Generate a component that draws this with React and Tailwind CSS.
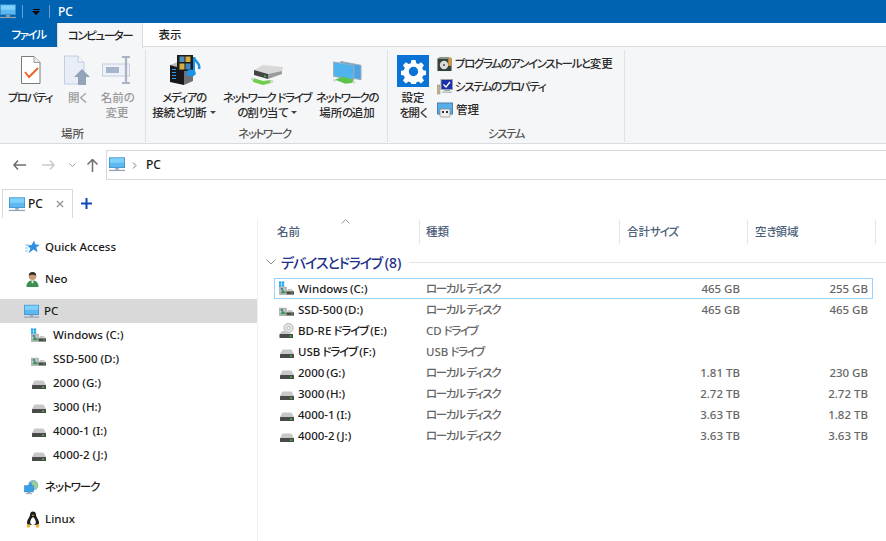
import React from "react";

const F = "font-['Noto_Sans','Noto_Sans_CJK_JP',sans-serif] [font-feature-settings:'palt']";

// Kana runs are set tighter than kanji and Latin, as in the reference's UI face.
function K({ children, loose }) {
  const parts = String(children).split(/([\u3040-\u30FF]+)/);
  return (
    <>
      {parts.map((p, i) =>
        /[\u3040-\u30FF]/.test(p) ? (
          <span key={i} className={loose ? "tracking-[-1.1px]" : "tracking-[-1.4px]"}>{p}</span>
        ) : (
          <span key={i} className="[word-spacing:-1px]">{p}</span>
        )
      )}
    </>
  );
}

function Monitor({ className = "w-4 h-4" }) {
  return (
    <svg viewBox="0 0 18 16" className={className}>
      <rect x="0.5" y="0.5" width="17" height="11" fill="#5cb8f0" stroke="#3a8fd0" strokeWidth="1" />
      <rect x="1" y="1" width="16" height="5" fill="#7fd0fa" />
      <rect x="7" y="12" width="4" height="2" fill="#9aa7b3" />
      <rect x="0" y="14" width="18" height="1.4" fill="#8fa3b5" />
    </svg>
  );
}
function Hdd({ className = "w-[14px] h-[14px]", led = "#3ec43e" }) {
  return (
    <svg viewBox="0 0 14 14" className={className}>
      <path d="M2.5 4.5h9L14 9H0z" fill="#c8c8c8" />
      <rect x="0" y="9" width="14" height="4" rx="0.5" fill="#4a4a4a" />
      <rect x="10" y="10.4" width="2" height="1.4" fill={led} />
    </svg>
  );
}
function WinDrive({ win }) {
  return (
    <svg viewBox="0 0 16 15" className="w-[15px] h-[15px]">
      {win && (
        <g fill="#14a0e8">
          <rect x="0" y="0" width="2.5" height="2.5" />
          <rect x="3" y="0" width="2.5" height="2.5" />
          <rect x="0" y="3" width="2.5" height="2.5" />
          <rect x="3" y="3" width="2.5" height="2.5" />
        </g>
      )}
      <rect x="0.5" y="6" width="7.5" height="8" fill="#b8c4b8" stroke="#888" strokeWidth="0.5" />
      <path d="M1.5 12.5l2.5-4 2 2.5 1-1v2.5z" fill="#3f8f5f" />
      <rect x="2" y="7" width="2" height="2" fill="#3a70b0" />
      <path d="M9.5 8h4l2 2.5h-7z" fill="#c8c8c8" />
      <rect x="8" y="10.5" width="8" height="3.5" fill="#4a4a4a" />
      <rect x="13" y="11.6" width="1.6" height="1.2" fill="#3ec43e" />
    </svg>
  );
}
function BdDrive() {
  return (
    <svg viewBox="0 0 15 16" className="w-[15px] h-[16px]">
      <circle cx="9.5" cy="5" r="4.6" fill="#e4e4e4" stroke="#a8a8a8" strokeWidth="0.8" />
      <circle cx="9.5" cy="5" r="1.6" fill="#fff" stroke="#999" strokeWidth="0.6" />
      <path d="M3 8h5l4 3H0.5z" fill="#c8c8c8" />
      <rect x="0.5" y="11" width="13.5" height="4" fill="#4a4a4a" />
      <rect x="10.5" y="12.4" width="2" height="1.4" fill="#3ec43e" />
    </svg>
  );
}
function Star() {
  return (
    <svg viewBox="0 0 15 14" className="w-[15px] h-[14px]">
      <path d="M9 0.5l1.4 4 4.4.2-3.5 2.7 1.3 4.8L8.6 9.6 3.5 13.3l1.9-5L2 5.6l4.6-.6z" fill="#2f8fe0" />
      <path d="M0 5h4M0 8h3M0 11h3" stroke="#7cc5f5" strokeWidth="1" />
    </svg>
  );
}
function Person() {
  return (
    <svg viewBox="0 0 16 17" className="w-[16px] h-[17px]">
      <circle cx="8" cy="5" r="4" fill="#c99a72" />
      <path d="M4 4.5C4 1.5 6 .5 8 .5s4 1 4 4C10 3 6 3 4 4.5z" fill="#2e2a26" />
      <path d="M1.5 16.5c0-5 3-7 6.5-7s6.5 2 6.5 7z" fill="#3c8f4f" />
      <path d="M7 9.5h2v3H7z" fill="#e4e4e4" />
    </svg>
  );
}
function Net() {
  return (
    <svg viewBox="0 0 17 17" className="w-[17px] h-[17px]">
      <circle cx="10.5" cy="6" r="5.6" fill="#4f9dd8" />
      <path d="M7 2c2 1 3 3 2 5s3 2 3 4c2-1 4-3 4-5s-2-4-4-5.400z" fill="#9ccc9a" />
      <rect x="0.500" y="6.500" width="10" height="7" fill="#39a0e8" stroke="#2b7fc0" strokeWidth="0.6" />
      <rect x="4" y="13.500" width="3" height="1.500" fill="#8aa0b0" />
      <rect x="2" y="15" width="7" height="1" fill="#8aa0b0" />
    </svg>
  );
}
function Tux() {
  return (
    <svg viewBox="0 0 14 17" className="w-[14px] h-[17px]">
      <path d="M7 0.500c-2 0-3 1.500-3 3.500 0 2-3 4.500-3 8 0 1.500 1 2 2 2h8c1 0 2-.5 2-2 0-3.500-3-6-3-8 0-2-1-3.500-3-3.500z" fill="#1b1b1b" />
      <path d="M7 6c-1.500 1-2.800 3-2.800 5.500 0 1.500 1 2.500 2.800 2.500s2.800-1 2.800-2.500C9.800 9 8.500 7 7 6z" fill="#fff" />
      <path d="M5.500 3.800L7 5.200l1.500-1.400z" fill="#efb02e" />
      <path d="M0.500 14l3-1 1 3-3 .8zM13.500 14l-3-1-1 3 3 .8z" fill="#efb02e" />
    </svg>
  );
}

function Properties() {
  return (
    <svg viewBox="0 0 24 30" className="w-[24px] h-[30px]">
      <path d="M3.500 1.500H16l6 6v21H3.500z" fill="#fff" stroke="#7a7a7a" />
      <path d="M16 1.500v6h6" fill="#eee" stroke="#9a9a9a" />
      <path d="M7 17l4 5 9-9" fill="none" stroke="#e8662a" strokeWidth="2" />
    </svg>
  );
}
function OpenIcon() {
  return (
    <svg viewBox="0 0 28 30" className="w-[28px] h-[30px]">
      <path d="M1.500 1H15l6 6v22H1.500z" fill="#e8edf6" stroke="#c2cee2" />
      <path d="M15 1v6h6" fill="#f4f6fb" stroke="#c2cee2" />
      <path d="M19 14l8 8h-4v8h-8v-8h-4z" fill="#93a3ba" />
    </svg>
  );
}
function RenameIcon() {
  return (
    <svg viewBox="0 0 30 28" className="w-[30px] h-[28px]">
      <rect x="0.500" y="8" width="27" height="12" fill="#eef1f7" stroke="#c4cedf" />
      <rect x="4" y="11" width="13" height="6" fill="#a6b5cc" />
      <path d="M20 1h8M24 1v26M20 27h8" fill="none" stroke="#a8b4c4" strokeWidth="2.200" />
    </svg>
  );
}
function MediaIcon() {
  return (
    <svg viewBox="0 0 34 32" className="w-[34px] h-[32px]">
      <path d="M3 11l8-3 15 4-9 3z" fill="#b9b9bd" />
      <path d="M3 11l14 4v16L3 28z" fill="#17171c" />
      <path d="M17 15l9-3v15l-9 4z" fill="#6f6f75" />
      <g fill="#2f9be6">
        <rect x="5" y="15" width="4" height="1" />
        <rect x="5" y="18" width="4" height="1" />
        <rect x="5" y="21" width="4" height="1" />
        <rect x="5" y="24" width="4" height="1" />
      </g>
      <rect x="10" y="1" width="16" height="16" fill="#1c1c1c" />
      <rect x="12.500" y="2.500" width="5" height="5.500" fill="#4f8fbf" />
      <rect x="18.500" y="2.500" width="5" height="5.500" fill="#d9ad3c" />
      <rect x="12.500" y="9.500" width="5" height="6" fill="#d9ad3c" />
      <rect x="18.500" y="9.500" width="5" height="6" fill="#3e86c4" />
      <path d="M27 3c0 5 7 5 5 12" fill="none" stroke="#1c93e6" strokeWidth="2.500" />
      <path d="M27 3v15" stroke="#1c93e6" strokeWidth="2" />
      <ellipse cx="24" cy="19" rx="4.800" ry="3.600" fill="#1c93e6" />
    </svg>
  );
}
function MapDrive() {
  return (
    <svg viewBox="0 0 32 20" className="w-[32px] h-[20px] mt-[9px]">
      <path d="M3 5L12 0l20 2-1 4-14 3z" fill="#d8d8d8" />
      <path d="M3 5l14 4v5L3 10z" fill="#444" />
      <path d="M17 9l14-3v3l-14 5z" fill="#9b9b9b" />
      <rect x="13" y="10.500" width="2" height="1.500" fill="#3ec43e" />
      <path d="M2 13l10 3 8-1v3l-8 2-10-3z" fill="#6fce4c" />
      <rect x="0" y="12.500" width="3" height="3" rx="1.500" fill="#d5d5d5" />
      <rect x="19" y="15" width="3.500" height="3" rx="1.500" fill="#d5d5d5" />
    </svg>
  );
}
function AddNet() {
  return (
    <svg viewBox="0 0 30 26" className="w-[29px] h-[26px] mt-[5px]">
      <path d="M8 1l21 4v15L8 16z" fill="#4ca4e6" stroke="#a8aeb4" />
      <path d="M.5 1.500l21 3.500v15l-21-3.500z" fill="#4fb4ee" stroke="#a4acb4" />
      <path d="M2 20l11 4 8-1v-3l-11-3z" fill="#5cc24a" />
      <rect x="0" y="19" width="3" height="3" rx="1.500" fill="#d5d5d5" />
      <rect x="20" y="21" width="3" height="3" rx="1.500" fill="#d5d5d5" />
    </svg>
  );
}
function Gear() {
  return (
    <div className="w-[32px] h-[32px] bg-[#0a74d6] flex items-center justify-center">
      <svg viewBox="0 0 24 24" className="w-[25px] h-[25px]">
        <path
          fill="#fff"
          fillRule="evenodd"
          d="M10 1h4l.6 3 2.200.9 2.500-1.700 2.800 2.800-1.700 2.500.9 2.200 3 .6v4l-3 .6-.9 2.200 1.700 2.500-2.800 2.800-2.500-1.700-2.200.9-.6 3h-4l-.6-3-2.200-.9-2.500 1.700-2.800-2.800 1.700-2.500-.9-2.200-3-.6v-4l3-.6.9-2.200-1.700-2.500 2.800-2.800 2.500 1.700 2.200-.9zM12 7.500a4.500 4.500 0 1 0 0 9 4.500 4.500 0 0 0 0-9z"
        />
      </svg>
    </div>
  );
}
function Uninstall() {
  return (
    <svg viewBox="0 0 16 16" className="w-[15px] h-[16px]">
      <rect x="0.500" y="2" width="15" height="13.500" fill="#34423a" />
      <rect x="12" y="1" width="3.500" height="9" fill="#d69a45" />
      <rect x="2" y="0.500" width="11" height="2" fill="#8a9a8a" />
      <circle cx="7.500" cy="9" r="4.500" fill="#dcdcdc" />
      <circle cx="7.500" cy="9" r="1" fill="#444" />
    </svg>
  );
}
function SysProps() {
  return (
    <svg viewBox="0 0 16 16" className="w-[16px] h-[16px]">
      <rect x="0" y="6" width="3" height="9" fill="#c8b48a" stroke="#777" strokeWidth="0.4" />
      <rect x="4" y="0.500" width="11.500" height="10" fill="#1c2fa8" stroke="#9aa4b0" />
      <path d="M6.500 5.500l2.500 2.500 4-5" stroke="#fff" strokeWidth="1.300" fill="none" />
      <rect x="7" y="11" width="6" height="1" fill="#9aa4b0" />
      <rect x="5" y="12.500" width="10" height="1.500" fill="#b8c0c8" />
    </svg>
  );
}
function Manage() {
  return (
    <svg viewBox="0 0 16 16" className="w-[16px] h-[16px]">
      <rect x="0.500" y="1" width="15" height="11" fill="#58aeea" stroke="#4f7fa8" />
      <rect x="3" y="7" width="10" height="8" rx="1" fill="#eee" stroke="#777" strokeWidth="0.600" />
      <rect x="5" y="9" width="2" height="2" fill="#333" />
      <rect x="9" y="9" width="2" height="2" fill="#333" />
    </svg>
  );
}

function Caret() {
  return <span className="inline-block ml-[3px] mb-[2px] align-middle w-0 h-0 border-l-[3px] border-r-[3px] border-t-[3px] border-l-transparent border-r-transparent border-t-[#444]" />;
}

function RibbonBtn({ w, icon, lines, dim }) {
  return (
    <div className={`flex flex-col items-center ${w} ${dim ? "text-[#9a9a9a]" : "text-[#2b2b2b]"}`}>
      <div className="h-[36px] mt-[2px] flex items-center justify-center">{icon}</div>
      <div className="text-[11.5px] leading-[15px] text-center whitespace-nowrap mt-[2px]">
        {lines.map((l, i) => (
          <div key={i}>{l}</div>
        ))}
      </div>
    </div>
  );
}

function Group({ w, label, children, className = "" }) {
  return (
    <div className={`${w} h-[92px] my-[3px] border-r border-[#dfe1e3] flex flex-col ${className}`}>
      <div className="flex-1 flex min-h-0">{children}</div>
      <div className="text-center text-[11.5px] leading-[14px] text-[#555] mb-[1px]">{label}</div>
    </div>
  );
}

function SideItem({ icon, label, className = "", pl = "pl-[25px]", h = "h-[24px]", gap = "gap-[5px]" }) {
  return (
    <div className={`flex items-center ${h} ${pl} ${gap} text-[11.5px] text-[#1a1a1a] ${className}`}>
      <span className="w-[15px] flex items-center justify-center shrink-0">{icon}</span>
      <span>{label}</span>
    </div>
  );
}

const rows = [
  { icon: <WinDrive win />, name: "Windows (C:)", type: "ローカル ディスク", size: "465 GB", free: "255 GB", sel: true },
  { icon: <WinDrive />, name: "SSD-500 (D:)", type: "ローカル ディスク", size: "465 GB", free: "465 GB" },
  { icon: <BdDrive />, name: "BD-RE ドライブ (E:)", type: "CD ドライブ", size: "", free: "" },
  { icon: <Hdd />, name: "USB ドライブ (F:)", type: "USB ドライブ", size: "", free: "" },
  { icon: <Hdd />, name: "2000 (G:)", type: "ローカル ディスク", size: "1.81 TB", free: "230 GB" },
  { icon: <Hdd />, name: "3000 (H:)", type: "ローカル ディスク", size: "2.72 TB", free: "2.72 TB" },
  { icon: <Hdd />, name: "4000-1 (I:)", type: "ローカル ディスク", size: "3.63 TB", free: "1.82 TB" },
  { icon: <Hdd />, name: "4000-2 (J:)", type: "ローカル ディスク", size: "3.63 TB", free: "3.63 TB" },
];

function HeaderCell({ w, label, pl = "pl-[7px]" }) {
  return (
    <div className={`${w} h-[24px] border-r border-[#e5e5e5] ${pl} flex items-center text-[11.5px] text-[#4c607a]`}><span><K loose>{label}</K></span></div>
  );
}

export default function App() {
  return (
    <div className={`w-[886px] h-[541px] overflow-hidden bg-white flex flex-col ${F} font-medium`}>
      {/* title bar */}
      <div className="h-[23px] bg-[#0063b1] flex items-center text-white shrink-0">
        <Monitor className="w-[16px] h-[15px]" />
        <div className="w-px h-[13px] bg-[#6a9ed0] ml-[6px]" />
        <div className="ml-[9px] flex flex-col items-center gap-[1px]">
          <div className="w-[7px] h-px bg-black" />
          <div className="w-0 h-0 border-l-[4px] border-r-[4px] border-t-[4px] border-l-transparent border-r-transparent border-t-black" />
        </div>
        <div className="w-px h-[13px] bg-[#6a9ed0] ml-[9px]" />
        <span className="ml-[8px] text-[12px]">PC</span>
      </div>
      {/* tabs */}
      <div className="h-[24px] flex shrink-0 border-b border-[#dadbdc] text-[11.5px]">
        <div className="w-[57px] h-[24px] bg-[#0063b1] text-white flex items-center justify-center"><span><K>ファイル</K></span></div>
        <div className="w-[86px] h-[25px] bg-[#f5f6f7] border-x border-[#dadbdc] text-[#222] flex items-center justify-center relative z-10"><span><K>コンピューター</K></span></div>
        <div className="w-[54px] flex items-center justify-center text-[#222]">表示</div>
      </div>
      {/* ribbon */}
      <div className="h-[97px] bg-[#f5f6f7] border-b border-[#dadbdc] flex shrink-0">
        <Group w="w-[146px]" label="場所">
          <div className="flex pl-[4px]">
            <RibbonBtn w="w-[52px]" icon={<Properties />} lines={[<K>プロパティ</K>]} />
            <RibbonBtn w="w-[42px]" dim icon={<OpenIcon />} lines={[<K>開く</K>]} />
            <RibbonBtn w="w-[38px]" dim icon={<RenameIcon />} lines={[<K>名前の</K>, "変更"]} />
          </div>
        </Group>
        <Group w="w-[242px]" label={<span className="pr-[4px] inline-block"><K>ネットワーク</K></span>}>
          <div className="flex pl-[3px]">
            <RibbonBtn w="w-[70px]" icon={<MediaIcon />} lines={[<K>メディアの</K>, <><K>接続と切断</K><Caret /></>]} />
            <RibbonBtn w="w-[96px]" icon={<MapDrive />} lines={[<K>ネットワーク ドライブ</K>, <><K>の割り当て</K><Caret /></>]} />
            <RibbonBtn w="w-[64px]" icon={<AddNet />} lines={[<K>ネットワークの</K>, <K>場所の追加</K>]} />
          </div>
        </Group>
        <Group w="w-[237px]" label={<K>システム</K>}>
          <div className="flex pl-[9px] pt-[5px]">
            <div className="w-[32px] flex flex-col items-center text-[11.5px] leading-[15px] text-[#2b2b2b] text-center whitespace-nowrap">
              <Gear />
              <div className="mt-[3px]">設定</div>
              <div><K>を開く</K></div>
            </div>
            <div className="ml-[8px] flex flex-col text-[11.5px] text-[#2b2b2b] -mt-[3px]">
              <div className="h-[23px] flex items-center gap-[3px] whitespace-nowrap"><Uninstall /><span><K>プログラムのアンインストールと変更</K></span></div>
              <div className="h-[23px] flex items-center gap-[2px] whitespace-nowrap"><SysProps /><span><K>システムのプロパティ</K></span></div>
              <div className="h-[23px] flex items-center gap-[3px] whitespace-nowrap"><Manage />管理</div>
            </div>
          </div>
        </Group>
      </div>
      {/* address */}
      <div className="h-[36px] pt-[6px] flex items-center shrink-0 pl-[13px]">
        <svg viewBox="0 0 13 10" className="w-[13px] h-[10px]"><path d="M5 .5L1 5l4 4.500M1 5h12" fill="none" stroke="#6d6d6d" strokeWidth="1.500" /></svg>
        <svg viewBox="0 0 13 10" className="w-[13px] h-[10px] ml-[16px]"><path d="M8 .5L12 5 8 9.500M12 5H0" fill="none" stroke="#c9c9c9" strokeWidth="1.500" /></svg>
        <svg viewBox="0 0 7 5" className="w-[7px] h-[5px] ml-[14px]"><path d="M.5 .5l3 3 3-3" fill="none" stroke="#9a9a9a" /></svg>
        <svg viewBox="0 0 11 13" className="w-[11px] h-[13px] ml-[11px]"><path d="M.5 5.500L5.500 .5l5 5M5.500 1v12" fill="none" stroke="#6d6d6d" strokeWidth="1.500" /></svg>
        <div className="ml-[8px] flex-1 h-[30px] border-y border-l border-[#d9d9d9] flex items-center pl-[2px] text-[12px] text-[#1a1a1a]">
          <Monitor className="w-[16px] h-[15px] -mt-[2px]" />
          <svg viewBox="0 0 5 7" className="w-[5px] h-[7px] ml-[7px]"><path d="M1 .5l3 3-3 3" fill="none" stroke="#777" /></svg>
          <span className="ml-[9px]">PC</span>
        </div>
      </div>
      {/* explorer tabs */}
      <div className="h-[38px] flex items-start pt-[9px] pl-[2px] shrink-0">
        <div className="w-[71px] h-[29px] border-x border-t border-[#d9d9d9] flex items-center pl-[6px] text-[12px] text-[#1a1a1a]">
          <Monitor className="w-[16px] h-[15px]" />
          <span className="ml-[3px]">PC</span>
          <svg viewBox="0 0 9 9" className="w-[8px] h-[8px] ml-[13px]"><path d="M1 1l7 7M8 1L1 8" stroke="#9a9a9a" strokeWidth="1.600" /></svg>
        </div>
        <svg viewBox="0 0 11 11" className="w-[11px] h-[11px] ml-[8px] mt-[9px]"><path d="M5.500 0v11M0 5.500h11" stroke="#0d47b5" strokeWidth="2" /></svg>
      </div>
      {/* main */}
      <div className="flex flex-1 min-h-0">
        <div className="w-[258px] shrink-0 border-r border-[#f1f1f1] pt-[17px]">
          <SideItem icon={<Star />} label="Quick Access" className="mb-[8px]" />
          <SideItem icon={<Person />} label="Neo" className="mb-[8px]" />
          <SideItem icon={<Monitor className="w-[17px] h-[15px]" />} label="PC" className="bg-[#d9d9d9]" pl="pl-[24px]" />
          <div className="pl-[31px]">
            <SideItem icon={<WinDrive win />} label="Windows (C:)" pl="pl-0" gap="gap-[7px]" />
            <SideItem icon={<WinDrive />} label="SSD-500 (D:)" pl="pl-0" gap="gap-[7px]" />
            <SideItem icon={<Hdd />} label="2000 (G:)" pl="pl-0" gap="gap-[7px]" />
            <SideItem icon={<Hdd />} label="3000 (H:)" pl="pl-0" gap="gap-[7px]" />
            <SideItem icon={<Hdd />} label="4000-1 (I:)" pl="pl-0" gap="gap-[7px]" />
            <SideItem icon={<Hdd />} label="4000-2 (J:)" pl="pl-0" gap="gap-[7px]" />
          </div>
          <SideItem icon={<Net />} label={<K loose>ネットワーク</K>} pl="pl-[24px]" gap="gap-[6px]" className="mt-[8px] mb-[8px]" />
          <SideItem icon={<Tux />} label="Linux" pl="pl-[25px]" />
        </div>
        <div className="flex-1 min-w-0 relative">
          <svg viewBox="0 0 9 5" className="absolute left-[83px] top-[1px] w-[9px] h-[5px]"><path d="M.5 4.500l4-4 4 4" fill="none" stroke="#9a9a9a" /></svg>
          <div className="flex pt-[2px] pl-[13px]">
            <HeaderCell w="w-[149px]" label="名前" pl="pl-[6px]" />
            <HeaderCell w="w-[200px]" label="種類" pl="pl-[6px]" />
            <HeaderCell w="w-[128px]" label="合計サイズ" />
            <HeaderCell w="w-[128px]" label="空き領域" />
          </div>
          <div className="flex items-center mt-[6px] h-[24px] pl-[8px] pr-0">
            <svg viewBox="0 0 10 6" className="w-[10px] h-[6px]"><path d="M.5 .5L5 5 9.500 .5" fill="none" stroke="#8a8a8a" /></svg>
            <span className="ml-[5px] text-[14px] text-[#1e3287]"><K loose>デバイスとドライブ (8)</K></span>
            <div className="flex-1 h-px bg-[#e4e4e4] ml-[8px]" />
          </div>
          <div className="mt-[4px] ml-[16px] w-[599px] text-[11.5px]">
            {rows.map((r) => (
              <div key={r.name} className={`h-[21px] flex items-center ${r.sel ? "border border-[#99d1ff]" : "border border-transparent"}`}>
                <span className="w-[15px] ml-[4px] flex items-center justify-center shrink-0">{r.icon}</span>
                <span className="ml-[4px] w-[128px] text-[#1a1a1a] whitespace-nowrap"><K loose>{r.name}</K></span>
                <span className="w-[190px] text-[#666] whitespace-nowrap"><K>{r.type}</K></span>
                <span className="w-[124px] text-right text-[#666]">{r.size}</span>
                <span className="w-[128px] text-right text-[#666]">{r.free}</span>
              </div>
            ))}
          </div>
        </div>
      </div>
    </div>
  );
}
